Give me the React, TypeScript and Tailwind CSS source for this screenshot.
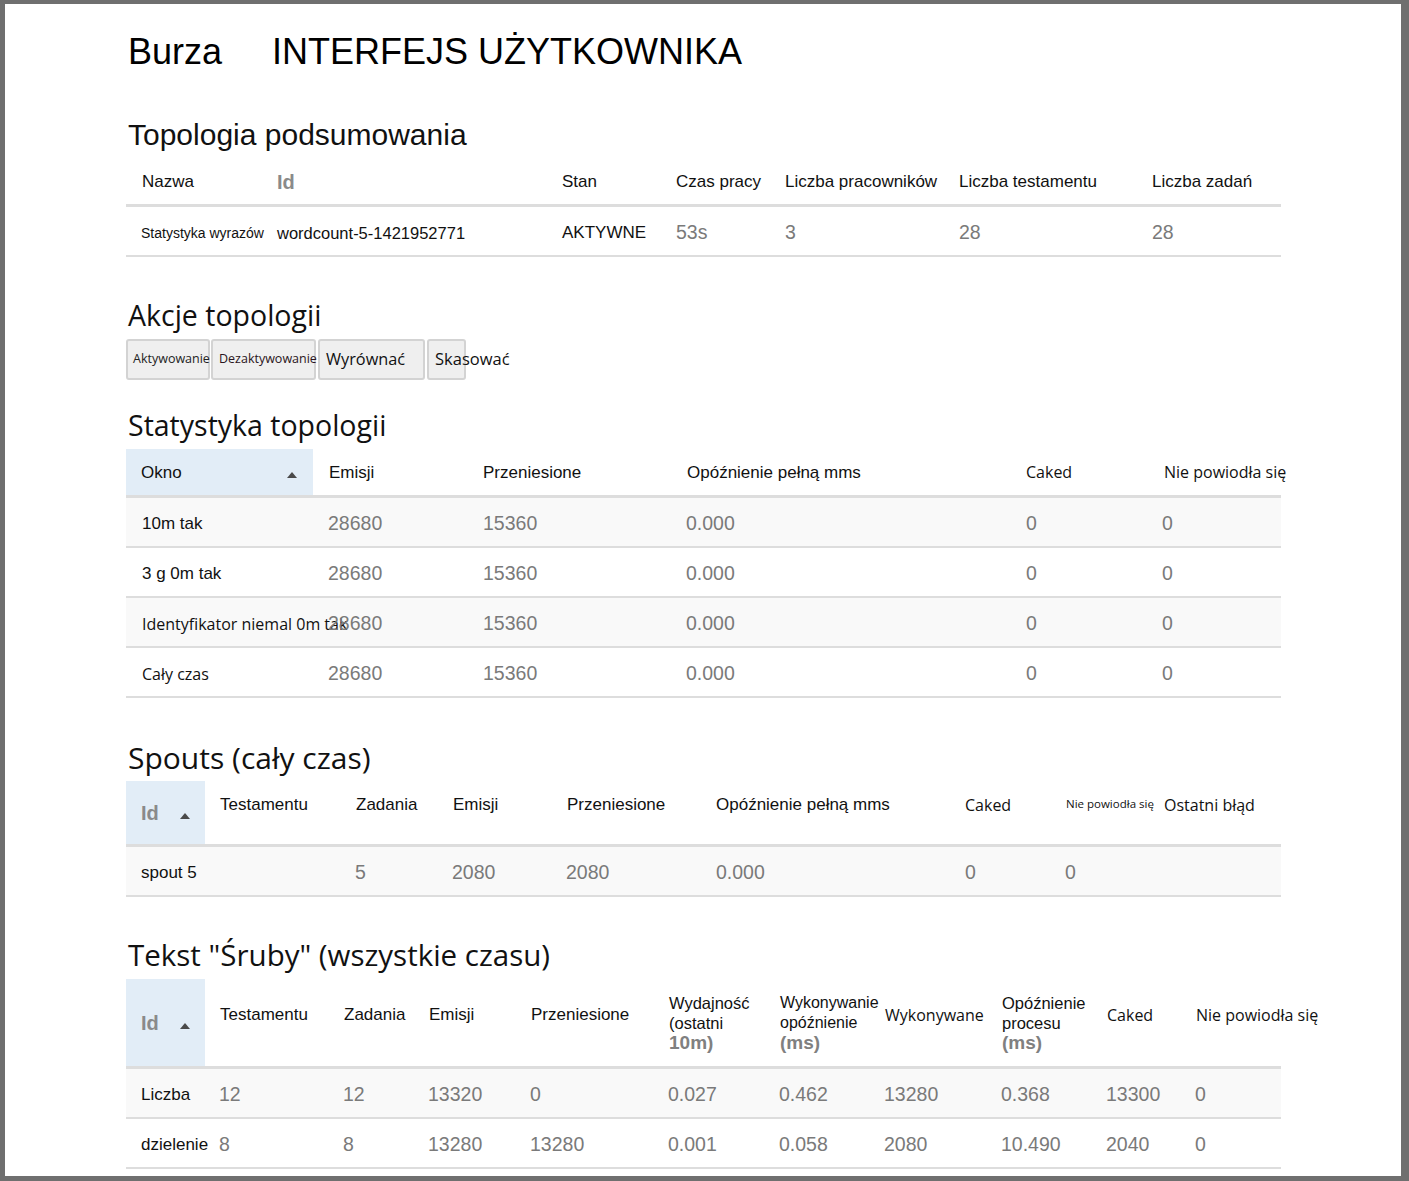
import React from "react";

const A = "font-['Liberation_Sans',Arial,sans-serif]";
const S = "font-['Open_Sans',sans-serif]";

function Arrow() {
  return (
    <svg width="10" height="6" viewBox="0 0 10 6" className="block">
      <path d="M5 0L10 6H0z" fill="#4a4a4a" />
    </svg>
  );
}

function Val({ children }: { children: React.ReactNode }) {
  return <div className={`${A} text-[19.5px] text-[#7a7a7a] whitespace-nowrap`}>{children}</div>;
}

function Hd({ children, cls = "" }: { children: React.ReactNode; cls?: string }) {
  return <div className={`${A} text-[17px] text-[#111] whitespace-nowrap ${cls}`}>{children}</div>;
}

function HdS({ children, cls = "" }: { children: React.ReactNode; cls?: string }) {
  return <div className={`${S} text-[16px] text-[#111] whitespace-nowrap ${cls}`}>{children}</div>;
}

function Heading({ children, cls }: { children: React.ReactNode; cls: string }) {
  return (
    <div className={`h-[36px] flex items-center pl-[2px] whitespace-nowrap text-[#111] ${cls}`}>{children}</div>
  );
}

export default function App() {
  const t1 = "grid grid-cols-[151px_285px_114px_109px_174px_193px_129px] w-[1155px]";
  const t2 = "grid grid-cols-[187px_155px_204px_339px_138px_132px] w-[1155px]";
  const t3 = "grid grid-cols-[79px_136px_97px_114px_149px_249px_101px_98px_132px] w-[1155px]";
  const t4 = "grid grid-cols-[79px_124px_85px_102px_138px_111px_105px_117px_105px_89px_100px] w-[1155px]";

  const statsRows = [
    { label: "10m tak", s: false, bg: "bg-[#f9f9f9]" },
    { label: "3 g 0m tak", s: false, bg: "bg-white" },
    { label: "Identyfikator niemal 0m tak", s: true, bg: "bg-[#f9f9f9]" },
    { label: "Cały czas", s: true, bg: "bg-white" },
  ];

  const bolts = [
    { id: "Liczba", v: ["12", "12", "13320", "0", "0.027", "0.462", "13280", "0.368", "13300", "0"], bg: "bg-[#f9f9f9]" },
    { id: "dzielenie", v: ["8", "8", "13280", "13280", "0.001", "0.058", "2080", "10.490", "2040", "0"], bg: "bg-white" },
  ];

  return (
    <div className="w-[1409px] h-[1181px] bg-[#6f6f6f] pt-[4px] pl-[5px] pr-[8px] pb-[5px] overflow-hidden">
      <div className="bg-white h-full pl-[121px] flex flex-col">
        {/* Title */}
        <div className={`mt-[27px] h-[42px] flex items-center pl-[2px] ${A} text-[36px] text-black whitespace-nowrap`}>
          <span className="w-[144px]">Burza</span>
          <span>INTERFEJS UŻYTKOWNIKA</span>
        </div>

        {/* Topologia podsumowania */}
        <div className="mt-[43px]">
          <Heading cls={`${A} text-[30px]`}>Topologia podsumowania</Heading>
        </div>
        <div className="mt-[5px]">
          <div className={`${t1} h-[50px] items-center border-b-[3px] border-[#dddddd] pt-[2px]`}>
            <Hd cls="pl-[16px]">Nazwa</Hd>
            <div className={`${A} text-[20px] font-bold text-[#8a8a8a]`}>Id</div>
            <Hd>Stan</Hd>
            <Hd>Czas pracy</Hd>
            <Hd>Liczba pracowników</Hd>
            <Hd>Liczba testamentu</Hd>
            <Hd>Liczba zadań</Hd>
          </div>
          <div className={`${t1} h-[50px] items-center border-b-2 border-[#dddddd] pt-[4px]`}>
            <div className={`${A} text-[14px] text-[#111] pl-[15px] whitespace-nowrap`}>Statystyka wyrazów</div>
            <div className={`${A} text-[16.5px] text-[#111] whitespace-nowrap`}>wordcount-5-1421952771</div>
            <Hd>AKTYWNE</Hd>
            <Val>53s</Val>
            <Val>3</Val>
            <Val>28</Val>
            <Val>28</Val>
          </div>
        </div>

        {/* Akcje topologii */}
        <div className="mt-[40px]">
          <Heading cls={`${S} text-[28.5px]`}>Akcje topologii</Heading>
        </div>
        <div className="mt-[6px] flex gap-[1px] h-[41px]">
          <div className={`w-[84px] h-full rounded-[3px] border-2 border-[#d3d3d3] bg-[#efefef] flex items-center pl-[5px] ${S} text-[12.5px] text-[#222] whitespace-nowrap`}>
            Aktywowanie
          </div>
          <div className={`w-[105px] h-full rounded-[3px] border-2 border-[#d3d3d3] bg-[#efefef] flex items-center pl-[6px] ${S} text-[12.5px] text-[#2a1420] whitespace-nowrap`}>
            Dezaktywowanie
          </div>
          <div className={`ml-[1px] w-[107px] h-full rounded-[3px] border-2 border-[#d3d3d3] bg-[#efefef] flex items-center pl-[6px] ${S} text-[16.3px] text-[#111] whitespace-nowrap`}>
            Wyrównać
          </div>
          <div className={`ml-[1px] w-[39px] h-full rounded-[3px] border-2 border-[#d3d3d3] bg-[#efefef] flex items-center pl-[6px] ${S} text-[16.5px] text-[#111] whitespace-nowrap`}>
            Skasować
          </div>
        </div>

        {/* Statystyka topologii */}
        <div className="mt-[27px]">
          <Heading cls={`${S} text-[28.5px]`}>Statystyka topologii</Heading>
        </div>
        <div className="mt-[6px]">
          <div className={`${t2} h-[49px] border-b-[3px] border-[#dddddd]`}>
            <div className="bg-[#e2edf7] flex items-center justify-between pl-[15px] pr-[16px] pt-[2px]">
              <Hd>Okno</Hd>
              <div className="mt-[4px]">
                <Arrow />
              </div>
            </div>
            <Hd cls="pl-[16px] flex items-center pt-[2px]">Emisji</Hd>
            <Hd cls="pl-[15px] flex items-center pt-[2px]">Przeniesione</Hd>
            <Hd cls="pl-[15px] flex items-center pt-[2px]">Opóźnienie pełną mms</Hd>
            <HdS cls="pl-[15px] flex items-center">Caked</HdS>
            <HdS cls="pl-[15px] flex items-center">Nie powiodła się</HdS>
          </div>
          {statsRows.map((r) => (
            <div key={r.label} className={`${t2} h-[50px] items-center border-b-2 border-[#dddddd] pt-[4px] ${r.bg}`}>
              {r.s ? (
                <div className={`${S} text-[16px] text-[#111] pl-[16px] whitespace-nowrap`}>{r.label}</div>
              ) : (
                <Hd cls="pl-[16px]">{r.label}</Hd>
              )}
              <Val><span className="pl-[15px]">28680</span></Val>
              <Val><span className="pl-[15px]">15360</span></Val>
              <Val><span className="pl-[14px]">0.000</span></Val>
              <Val><span className="pl-[15px]">0</span></Val>
              <Val><span className="pl-[13px]">0</span></Val>
            </div>
          ))}
        </div>

        {/* Spouts */}
        <div className="mt-[41px]">
          <Heading cls={`${S} text-[30px]`}>Spouts (cały czas)</Heading>
        </div>
        <div className="mt-[6px]">
          <div className={`${t3} h-[66px] border-b-[3px] border-[#dddddd]`}>
            <div className="bg-[#e2edf7] flex items-center pl-[15px]">
              <span className={`${A} text-[20px] font-bold text-[#8a8a8a]`}>Id</span>
              <span className="ml-[21px] mt-[6px]">
                <Arrow />
              </span>
            </div>
            <Hd cls="pl-[15px] flex items-center pb-[16px]">Testamentu</Hd>
            <Hd cls="pl-[15px] flex items-center pb-[16px]">Zadania</Hd>
            <Hd cls="pl-[15px] flex items-center pb-[16px]">Emisji</Hd>
            <Hd cls="pl-[15px] flex items-center pb-[16px]">Przeniesione</Hd>
            <Hd cls="pl-[15px] flex items-center pb-[16px]">Opóźnienie pełną mms</Hd>
            <HdS cls="pl-[15px] flex items-center pb-[16px]">Caked</HdS>
            <div className={`${S} text-[11.5px] text-[#111] whitespace-nowrap pl-[15px] flex items-center pb-[18px]`}>Nie powiodła się</div>
            <HdS cls="pl-[15px] flex items-center pb-[16px]">Ostatni błąd</HdS>
          </div>
          <div className={`${t3} h-[50px] items-center border-b-2 border-[#dddddd] pt-[4px] bg-[#f9f9f9]`}>
            <Hd cls="pl-[15px]">spout 5</Hd>
            <div />
            <Val><span className="pl-[14px]">5</span></Val>
            <Val><span className="pl-[14px]">2080</span></Val>
            <Val><span className="pl-[14px]">2080</span></Val>
            <Val><span className="pl-[15px]">0.000</span></Val>
            <Val><span className="pl-[15px]">0</span></Val>
            <Val><span className="pl-[14px]">0</span></Val>
            <div />
          </div>
        </div>

        {/* Bolts */}
        <div className="mt-[40px]">
          <Heading cls={`${S} text-[29.5px]`}>Tekst "Śruby" (wszystkie czasu)</Heading>
        </div>
        <div className="mt-[6px]">
          <div className={`${t4} h-[90px] border-b-[3px] border-[#dddddd]`}>
            <div className="bg-[#e2edf7] flex items-center pl-[15px]">
              <span className={`${A} text-[20px] font-bold text-[#8a8a8a]`}>Id</span>
              <span className="ml-[21px] mt-[6px]">
                <Arrow />
              </span>
            </div>
            <Hd cls="pl-[15px] flex items-center pb-[16px]">Testamentu</Hd>
            <Hd cls="pl-[15px] flex items-center pb-[16px]">Zadania</Hd>
            <Hd cls="pl-[15px] flex items-center pb-[16px]">Emisji</Hd>
            <Hd cls="pl-[15px] flex items-center pb-[16px]">Przeniesione</Hd>
            <div className={`pl-[15px] flex flex-col justify-center ${A} text-[16.5px] leading-[20px] text-[#111] whitespace-nowrap`}>
              <span>Wydajność</span>
              <span>(ostatni</span>
              <span className="text-[19px] font-bold text-[#808080] leading-[20px]">10m)</span>
            </div>
            <div className={`pl-[15px] flex flex-col justify-center ${A} text-[16px] leading-[20px] text-[#111] whitespace-nowrap`}>
              <span>Wykonywanie</span>
              <span>opóźnienie</span>
              <span className="text-[19px] font-bold text-[#808080] leading-[20px]">(ms)</span>
            </div>
            <HdS cls="pl-[15px] flex items-center pb-[16px]">Wykonywane</HdS>
            <div className={`pl-[15px] flex flex-col justify-center ${A} text-[16.5px] leading-[20px] text-[#111] whitespace-nowrap`}>
              <span>Opóźnienie</span>
              <span>procesu</span>
              <span className="text-[19px] font-bold text-[#808080] leading-[20px]">(ms)</span>
            </div>
            <HdS cls="pl-[15px] flex items-center pb-[16px]">Caked</HdS>
            <HdS cls="pl-[15px] flex items-center pb-[16px]">Nie powiodła się</HdS>
          </div>
          {bolts.map((b) => (
            <div key={b.id} className={`${t4} h-[50px] items-center border-b-2 border-[#dddddd] pt-[3px] ${b.bg}`}>
              <Hd cls="pl-[15px]">{b.id}</Hd>
              {b.v.map((x, i) => (
                <Val key={i}>
                  <span className="pl-[14px]">{x}</span>
                </Val>
              ))}
            </div>
          ))}
        </div>
      </div>
    </div>
  );
}
